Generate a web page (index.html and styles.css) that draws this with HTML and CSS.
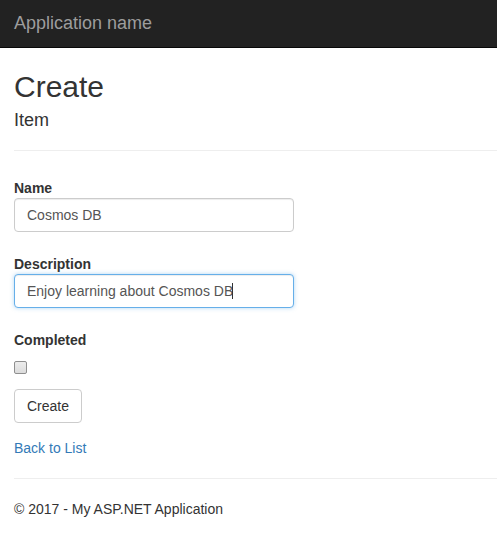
FILE: index.html
```html
<!DOCTYPE html>
<html>
<head>
<meta charset="utf-8">
<title>Create - My ASP.NET Application</title>
<link rel="stylesheet" href="styles.css">
</head>
<body>
<div class="navbar">
  <a class="navbar-brand" href="#">Application name</a>
</div>
<div class="body-content">
  <h2 class="page-title">Create</h2>
  <form class="form-horizontal">
    <h4 class="subtitle">Item</h4>
    <hr class="rule">
    <div class="form-group">
      <label class="control-label" for="name">Name</label>
      <input class="form-control" id="name" type="text" value="Cosmos DB">
    </div>
    <div class="form-group">
      <label class="control-label" for="desc">Description</label>
      <div class="input-wrap">
        <input class="form-control focused" id="desc" type="text" value="Enjoy learning about Cosmos DB">
        <span class="caret-mark"></span>
      </div>
    </div>
    <div class="form-group">
      <label class="control-label" for="done">Completed</label>
      <div class="checkbox">
        <input class="check" id="done" type="checkbox">
      </div>
    </div>
    <div class="form-group">
      <button type="button" class="btn">Create</button>
    </div>
  </form>
  <div class="back"><a href="#" class="link">Back to List</a></div>
  <hr class="rule">
  <footer class="footer">
    <p class="copyright">© 2017 - My ASP.NET Application</p>
  </footer>
</div>
</body>
</html>
```
FILE: styles.css
```css
* { box-sizing: border-box; }
html, body { margin: 0; padding: 0; }
body {
  font-family: "Liberation Sans", Arial, sans-serif;
  font-size: 14px;
  line-height: 20px;
  color: #333;
  background: #fff;
}
.navbar {
  height: 48px;
  background: #222;
  border-bottom: 1px solid #080808;
  padding: 13px 14px 0;
}
.navbar-brand {
  display: block;
  font-size: 18px;
  line-height: 20px;
  color: #9d9d9d;
  text-decoration: none;
}
.body-content {
  padding: 0 14px;
}
.page-title {
  margin: 22px 0 0;
  font-size: 30px;
  line-height: 33px;
  font-weight: 500;
}
.subtitle {
  margin: 7px 0 0;
  font-size: 18px;
  line-height: 20px;
  font-weight: 500;
}
.rule {
  margin: 20px 0;
  border: 0;
  border-top: 1px solid #eee;
  height: 0;
  margin-right: -14px;
}
.form-horizontal { margin: 0; }
.form-group {
  margin-bottom: 15px;
}
.control-label {
  display: block;
  padding-top: 7px;
  font-weight: bold;
  line-height: 20px;
}
.form-control {
  display: block;
  width: 280px;
  height: 34px;
  padding: 6px 12px;
  font-family: inherit;
  font-size: 14px;
  line-height: 20px;
  color: #555;
  background: #fff;
  border: 1px solid #ccc;
  border-radius: 4px;
  box-shadow: inset 0 1px 1px rgba(0,0,0,.075);
  outline: none;
  margin: 0;
}
.form-control.focused {
  border-color: #66afe9;
  box-shadow: inset 0 1px 1px rgba(0,0,0,.075), 0 0 4px rgba(102,175,233,.5);
}
.input-wrap {
  position: relative;
  width: 280px;
}
.caret-mark {
  position: absolute;
  left: 218px;
  top: 9px;
  width: 1px;
  height: 16px;
  background: #333;
}
.checkbox {
  padding-top: 11px;
  height: 24px;
}
.check {
  -webkit-appearance: none;
  appearance: none;
  display: block;
  width: 13px;
  height: 13px;
  margin: 0;
  border: 1px solid #8f8f8f;
  border-radius: 2px;
  background: linear-gradient(#ececec, #dcdcdc);
}
.btn {
  display: inline-block;
  height: 34px;
  padding: 6px 12px;
  font-family: inherit;
  font-size: 14px;
  line-height: 20px;
  color: #333;
  background: #fff;
  border: 1px solid #ccc;
  border-radius: 4px;
  margin: 0;
}
.back { line-height: 20px; }
.link {
  color: #337ab7;
  text-decoration: none;
}
.footer { margin: 0; }
.copyright { margin: 0; }
```
